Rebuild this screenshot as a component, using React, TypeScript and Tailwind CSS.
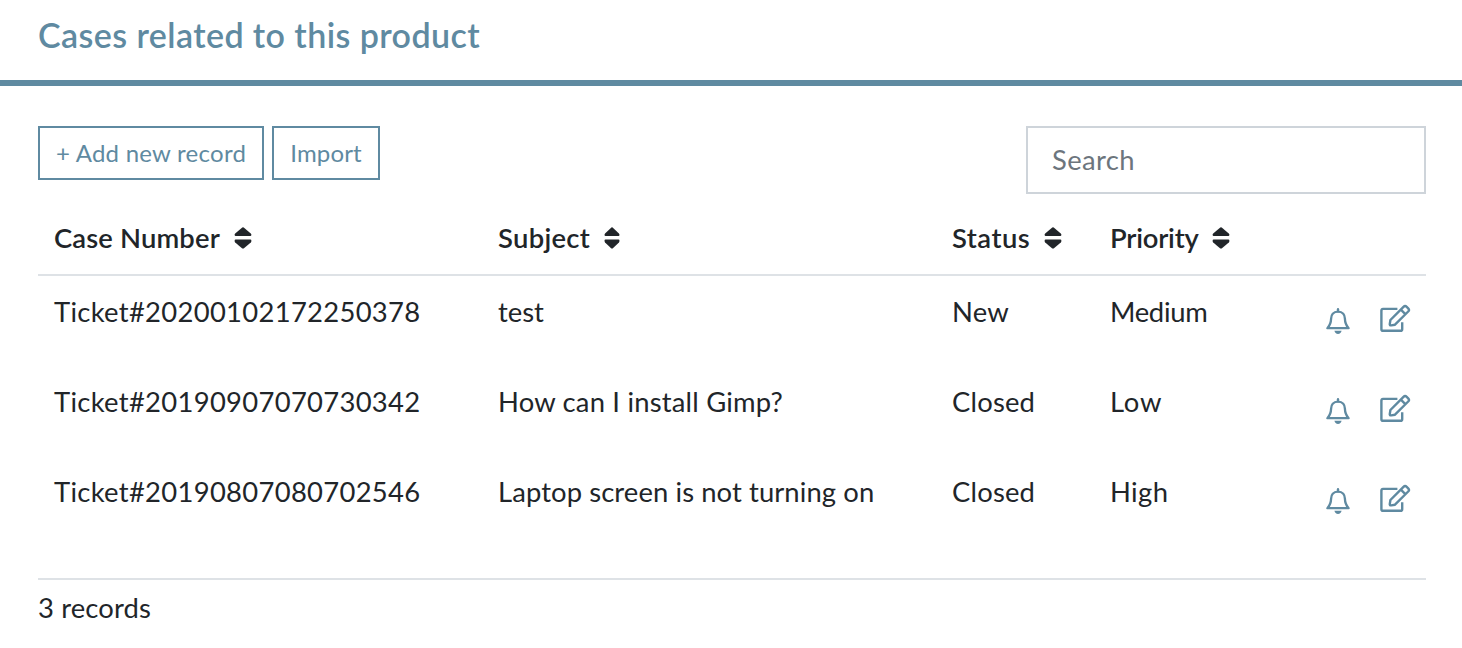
function SortIcon({ className }: { className: string }) {
  return (
    <svg className={`h-[22px] shrink-0 ${className}`} viewBox="0 0 18 22" preserveAspectRatio="none" fill="currentColor">
      <path d="M8.3.4Q9 0 9.7.4L16.8 6.4Q17.4 7 17.4 7.8Q17.4 9 16.4 9H1.6Q.6 9 .6 7.8Q.6 7 1.2 6.4Z" />
      <path d="M8.3 21.4Q9 21.8 9.7 21.4L16.8 15.4Q17.4 14.8 17.4 13.8Q17.4 12.6 16.4 12.6H1.6Q.6 12.6 .6 13.8Q.6 14.8 1.2 15.4Z" />
    </svg>
  );
}

function BellIcon() {
  return (
    <svg className="h-[26px] w-6" viewBox="0 0 24 26" fill="none" stroke="currentColor" strokeWidth="2.3" strokeLinejoin="round">
      <path d="M12 3.6C7.2 3.6 5.2 7 5.1 10.6C5 15 3.8 17.5 1.4 20.2H22.6C20.2 17.5 19 15 18.9 10.6C18.8 7 16.8 3.6 12 3.6Z" />
      <path d="M12 1.2V3.4" strokeLinecap="round" />
      <path d="M8.4 22.8H15.6C15.2 24.8 13.9 25.9 12 25.9C10.1 25.9 8.8 24.8 8.4 22.8Z" fill="currentColor" stroke="none" />
    </svg>
  );
}

function EditIcon() {
  return (
    <svg className="h-[30px] w-[31px]" viewBox="0 0 31 30" fill="none" stroke="currentColor" strokeWidth="2.4" strokeLinejoin="round">
      <path d="M17.4 4.9H3Q1.4 4.9 1.4 6.5V25.2Q1.4 26.8 3 26.8H20.6Q22.2 26.8 22.2 25.2V18.2" />
      <path d="M10.4 16L23.5 2.8Q25.1 1.2 26.7 2.8L28.2 4.3Q29.8 5.9 28.2 7.5L15 20.7L11.2 21.4Q9.5 21.6 9.8 19.9Z" />
      <path d="M20.8 5.6L25.4 10.2" />
    </svg>
  );
}

const headings = [
  { name: "Case Number", className: "w-[180px] tracking-[.15px]", icon: "w-[18px]" },
  { name: "Subject", className: "w-[106px] tracking-[.3px]", icon: "w-4" },
  { name: "Status", className: "w-[92px] tracking-[.5px]", icon: "w-[18px]" },
  { name: "Priority", className: "w-[102px] tracking-[-.2px]", icon: "w-[18px]" },
];

const rows = [
  { ticket: "Ticket#20200102172250378", subject: "test", status: "New", priority: "Medium", subjectSpacing: "", prioritySpacing: "tracking-[-.3px]" },
  { ticket: "Ticket#20190907070730342", subject: "How can I install Gimp?", status: "Closed", priority: "Low", subjectSpacing: "tracking-[.2px]", prioritySpacing: "tracking-[.8px]" },
  { ticket: "Ticket#20190807080702546", subject: "Laptop screen is not turning on", status: "Closed", priority: "High", subjectSpacing: "tracking-[.1px]", prioritySpacing: "tracking-[.4px]" },
];

const columns = "grid grid-cols-[444px_454px_158px_1fr_85px] pl-4 pr-[15px]";

export default function App() {
  return (
    <div className="h-[648px] bg-white font-['Lato',sans-serif] text-[27.4px] leading-10 text-[#212529]">
      <header className="flex h-[86px] items-start border-b-6 border-[#5f8aa1] pl-[38px] pt-[15px] text-[34px] font-semibold tracking-[.42px] text-[#5f8aa1]">
        <h1>Cases related to this product</h1>
      </header>
      <main className="pl-[38px] pr-9 pt-10">
        <div className="flex h-[78px] items-start justify-between">
          <div className="flex gap-2 text-[24px] text-[#5f8aa1]">
            <button className="h-[54px] w-[226px] whitespace-nowrap border-2 border-[#5f8aa1] tracking-[.25px]">+ Add new record</button>
            <button className="h-[54px] w-[108px] border-2 border-[#5f8aa1] tracking-[.15px]">Import</button>
          </div>
          <input className="h-[68px] w-[400px] border-2 border-[#ced4da] px-6 pb-0.5 tracking-[.4px] placeholder:text-[#6c757d]" placeholder="Search" />
        </div>
        <div className={`${columns} h-[72px] border-b-2 border-[#dee2e6] pt-3.5 font-semibold`}>
          {headings.map(({ name, className, icon }) => (
            <div key={name} className="flex">
              <span className={className}>{name}</span>
              <span className="pt-[9px]"><SortIcon className={icon} /></span>
            </div>
          ))}
        </div>
        <div className="h-[302px]">
          {rows.map((row) => (
            <div key={row.ticket} className={`${columns} h-[90px] pt-4`}>
              <span className="tracking-[.31px]">{row.ticket}</span>
              <span className={row.subjectSpacing}>{row.subject}</span>
              <span className="tracking-[.2px]">{row.status}</span>
              <span className={row.prioritySpacing}>{row.priority}</span>
              <div className="flex items-start justify-between pt-3 text-[#5f8aa1]">
                <span className="pt-1"><BellIcon /></span>
                <EditIcon />
              </div>
            </div>
          ))}
        </div>
        <footer className="border-t-2 border-[#dee2e6] pt-2 tracking-[.15px]">3 records</footer>
      </main>
    </div>
  );
}
